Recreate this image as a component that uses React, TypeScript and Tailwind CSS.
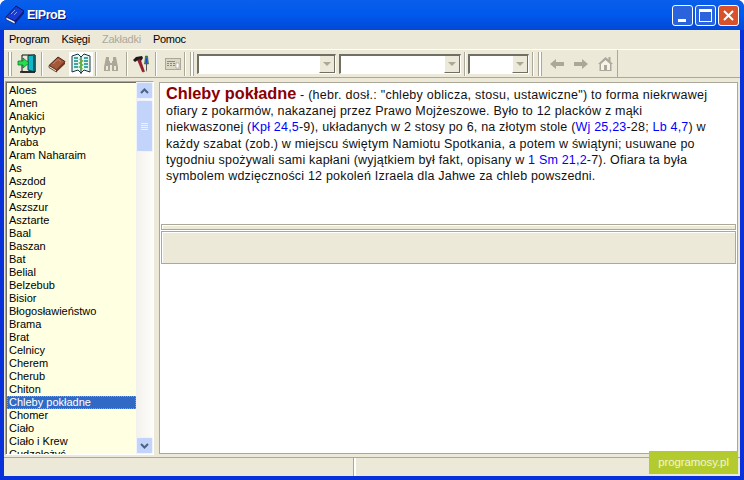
import React from 'react';

const terms = [
  'Aloes', 'Amen', 'Anakici', 'Antytyp', 'Araba', 'Aram Naharaim', 'As', 'Aszdod', 'Aszery', 'Aszszur', 'Asztarte',
  'Baal', 'Baszan', 'Bat', 'Belial', 'Belzebub', 'Bisior', 'Błogosławieństwo', 'Brama', 'Brat', 'Celnicy', 'Cherem',
  'Cherub', 'Chiton', 'Chleby pokładne', 'Chomer', 'Ciało', 'Ciało i Krew', 'Cudzołożyć',
];

const Gripper = ({ className }: { className: string }) => (
  <div className={`w-[4px] h-[24px] border-x border-x-[#aca899] bg-white shrink-0 ${className}`} />
);
const Sep = ({ className }: { className: string }) => (
  <div className={`w-[2px] h-[24px] border-l border-l-[#aca899] bg-white shrink-0 ${className}`} />
);

const Combo = ({ className }: { className: string }) => (
  <div className={`h-[20px] shrink-0 flex bg-white border-t-2 border-l-2 border-t-[#716f64] border-l-[#716f64] border-r border-b border-r-white border-b-white ${className}`}>
    <div className="flex-1" />
    <div className="w-[16px] bg-[#ece9d8] border-l border-l-white border-r border-r-[#716f64] border-b border-b-[#716f64] flex items-center justify-center">
      <div className="w-0 h-0 border-x-[4px] border-x-transparent border-t-[4px] border-t-[#aca899]" />
    </div>
  </div>
);

const DoorIcon = () => (
  <svg width="20" height="20" viewBox="0 0 20 20">
    <path d="M5 1h13v17H5z" fill="#ece9d8" stroke="#111" strokeWidth="1" />
    <path d="M11 1.500l7-0.500v17l-7-2z" fill="#12b8c6" stroke="#063c44" strokeWidth="1" />
    <path d="M16 2h2v16h-2z" fill="#0a5f6a" />
    <path d="M1 7h5V4l6 5-6 5v-3H1z" fill="#22e04a" stroke="#0b7a30" strokeWidth="0.8" />
    <path d="M3 18h15" stroke="#111" strokeWidth="1.400" />
  </svg>
);

const BookIcon = () => (
  <svg width="18" height="18" viewBox="0 0 18 18">
    <path d="M1 10.500L10 2l7 4.500-8.500 8.500z" fill="#a5573a" stroke="#4a2415" />
    <path d="M1 10.500l7.500 4.500v2L1 12.500z" fill="#f6ecd8" stroke="#4a2415" strokeWidth="0.8" />
    <path d="M8.500 15L17 6.500V9L8.500 17z" fill="#6e3219" />
    <path d="M5 9l5-4.500 3 2" stroke="#c98468" fill="none" />
  </svg>
);

const MapIcon = () => (
  <svg width="20" height="22" viewBox="0 0 20 22">
    <path d="M1 3l6 -2 3 3 3-3 6 2v16l-6-2-3 3-3-3-6 2z" fill="#e8f6f0" stroke="#12383f" />
    <path d="M10 4v17" stroke="#12383f" />
    <path d="M3 5h4M3 8h4M3 11h4M3 14h4M13 5h4M13 8h4M13 11h4M13 14h4" stroke="#0d8a90" strokeWidth="1.600" />
    <path d="M8.500 6l3 2-3 2 3 2-3 2 3 2" stroke="#5fb52c" strokeWidth="1.400" fill="none" />
  </svg>
);

const BinocularsIcon = () => (
  <svg width="16" height="16" viewBox="0 0 16 16" fill="#aca899">
    <path d="M3 1h3v4h1v2h2V5h1V1h3l2 10v4H9V9H7v6H1v-4z" />
    <path d="M3 10h2v4H3zM11 10h2v4h-2z" fill="#ece9d8" />
  </svg>
);

const ToolsIcon = () => (
  <svg width="18" height="18" viewBox="0 0 18 18">
    <path d="M1 5l3-3 6-1 1 2-2 3-3-1-3 2z" fill="#1a1a1a" />
    <path d="M5.500 5l2.500-1.500L12.500 16.500 10.500 17z" fill="#a61b2a" stroke="#5a0f15" strokeWidth="0.5" />
    <path d="M13.500 1h2l1 8h-4z" fill="#1e9a3c" stroke="#0a4a1a" strokeWidth="0.5" />
    <path d="M14 3h1v5h-1z" fill="#2344c8" />
    <path d="M14 9h1v6l-0.500 2-0.500-2z" fill="#555" />
  </svg>
);

const CalcIcon = () => (
  <svg width="16" height="12" viewBox="0 0 16 12">
    <path d="M0 0h16v12H0z" fill="#aca899" />
    <path d="M1 1h14v10H1z" fill="#dcd8c6" />
    <path d="M2 3h8v1H2zM2 5h2v1H2zM5 5h2v1H5zM8 5h2v1H8zM2 7h2v1H2zM5 7h2v1H5zM8 7h2v1H8z" fill="#8d8a7c" />
    <path d="M11 5h3v5h-3z" fill="#fff" stroke="#8d8a7c" strokeWidth="0.5" />
  </svg>
);

const ArrowIcon = ({ flip }: { flip?: boolean }) => (
  <svg width="14" height="12" viewBox="0 0 14 12" className={flip ? '-scale-x-100' : ''}>
    <path d="M0 6l6-5v3h8v4H6v3z" fill="#aca899" />
  </svg>
);

const HomeIcon = () => (
  <svg width="15" height="15" viewBox="0 0 15 15">
    <path d="M0 8l7.500-7 3 2.500V1h2v4.500L15 8h-1.500v7h-12V8z" fill="#aca899" />
    <path d="M3 8l4.500-4L12 8v6H3z" fill="#f5f3ea" />
    <path d="M6 9h3v5H6z" fill="#aca899" />
  </svg>
);

const ScrollArrow = ({ down }: { down?: boolean }) => (
  <div className="h-[17px] shrink-0 rounded-[2px] bg-[#c3d4fb] border border-[#eef3ff] flex items-center justify-center">
    <svg width="9" height="6" viewBox="0 0 9 6" className={down ? '' : 'rotate-180'}>
      <path d="M1 1l3.500 3.500L8 1" stroke="#4d6185" strokeWidth="2" fill="none" />
    </svg>
  </div>
);

const Ref = ({ children }: { children: React.ReactNode }) => <span className="text-[#0000ff]">{children}</span>;

const App: React.FC = () => {
  return (
    <div className="w-[744px] h-[480px] relative overflow-hidden flex flex-col bg-[#0831d9] rounded-t-[7px] font-['Liberation_Sans',Arial,sans-serif] text-black">
      {/* title bar */}
      <div className="h-[30px] shrink-0 flex items-center pl-[5px] pr-[5px] bg-gradient-to-b from-[#0a5fea] via-[#0058ee] to-[#0348d4]">
        <svg width="20" height="20" viewBox="0 0 20 20">
          <path d="M1 12L11 1l8 5-9 10z" fill="#1a3ad8" stroke="#0a1660" />
          <path d="M1 12l9 4.500v2.500L1 14.500z" fill="#fff" stroke="#0a1660" strokeWidth="0.7" />
          <path d="M10 16.500L19 6v2.500L10 19z" fill="#0f1f80" />
          <path d="M6 9l4-4M9 10l3-3" stroke="#7fa6ff" />
        </svg>
        <span className="ml-[2px] text-white text-[12.500px] font-bold tracking-[-0.500px] [text-shadow:1px_1px_#0f1089]">ElProB</span>
        <div className="ml-auto flex gap-[2px]">
          <div className="w-[21px] h-[21px] rounded-[3px] border border-white bg-[#2b63dd] flex items-end pb-[3px] pl-[5px]">
            <div className="w-[8px] h-[3px] bg-white" />
          </div>
          <div className="w-[21px] h-[21px] rounded-[3px] border border-white bg-[#2b63dd] flex items-center justify-center">
            <div className="w-[13px] h-[13px] border border-white border-t-[3px]" />
          </div>
          <div className="w-[21px] h-[21px] rounded-[3px] border border-white bg-[#d9512a] flex items-center justify-center">
            <svg width="11" height="11" viewBox="0 0 11 11">
              <path d="M1 1l9 9M10 1l-9 9" stroke="#fff" strokeWidth="2" />
            </svg>
          </div>
        </div>
      </div>

      <div className="flex-1 min-h-0 mx-[4px] mb-[4px] bg-[#ece9d8] flex flex-col">
        {/* menu */}
        <div className="h-[19px] shrink-0 flex items-center pl-[5px] gap-[12px] text-[11px] tracking-[-0.250px]">
          <span>Program</span>
          <span>Księgi</span>
          <span className="text-[#aca899]">Zakładki</span>
          <span>Pomoc</span>
        </div>

        {/* toolbar */}
        <div className="h-[29px] shrink-0 border-t border-t-white border-b border-b-[#aca899] flex items-center">
          <div className="h-[27px] w-[614px] flex items-center border-r border-r-[#aca899] pl-[1px]">
            <Gripper className="ml-[3px]" />
            <div className="w-[20px] ml-[5px] flex justify-center"><DoorIcon /></div>
            <Sep className="ml-[4px]" />
            <div className="w-[18px] ml-[5px] flex justify-center"><BookIcon /></div>
            <div className="w-[24px] h-[24px] ml-[3px] bg-white flex items-center justify-center"><MapIcon /></div>
            <Sep className="ml-[2px]" />
            <div className="w-[16px] ml-[6px] flex justify-center"><BinocularsIcon /></div>
            <Sep className="ml-[7px]" />
            <div className="w-[18px] ml-[4px] flex justify-center"><ToolsIcon /></div>
            <Sep className="ml-[5px]" />
            <div className="w-[16px] ml-[8px] flex justify-center"><CalcIcon /></div>
            <Sep className="ml-[3px]" />
            <Gripper className="ml-[4px]" />
            <Combo className="w-[139px] ml-[3px]" />
            <Combo className="w-[122px] ml-[3px]" />
            <Sep className="ml-[3px]" />
            <Combo className="w-[61px] ml-[2px]" />
            <Sep className="ml-[3px]" />
            <Gripper className="ml-[4px]" />
            <div className="ml-[8px] flex items-center gap-[10px]">
              <ArrowIcon />
              <ArrowIcon flip />
              <HomeIcon />
            </div>
          </div>
        </div>

        {/* main */}
        <div className="flex-1 min-h-0 flex pt-[3px] pl-[1px] pr-[2px]">
          <div className="w-[149px] shrink-0 flex border border-[#aca899] border-r-white border-b-white">
            <div className="w-[130px] pt-[1px] bg-[#ffffe1] overflow-hidden border-l border-t border-[#716f64]">
              {terms.map((term) => (
                <div
                  key={term}
                  className={`h-[13px] pl-[2px] text-[11px] leading-[13px] whitespace-nowrap ${
                    term === 'Chleby pokładne' ? 'bg-[#316ac5] text-white outline-1 -outline-offset-1 outline-dotted outline-[#c59a3a]' : ''
                  }`}
                >
                  {term}
                </div>
              ))}
            </div>
            <div className="w-[17px] bg-gradient-to-r from-[#f3f1ec] to-[#fdfdfa] flex flex-col">
              <ScrollArrow />
              <div className="h-[52px] mt-[1px] shrink-0 bg-[#c3d4fb] border border-[#eef3ff] rounded-[2px] flex flex-col items-center justify-center gap-[1px]">
                <div className="w-[7px] h-[1px] bg-[#eef3ff]" />
                <div className="w-[7px] h-[1px] bg-[#eef3ff]" />
                <div className="w-[7px] h-[1px] bg-[#eef3ff]" />
                <div className="w-[7px] h-[1px] bg-[#eef3ff]" />
              </div>
              <div className="flex-1" />
              <ScrollArrow down />
            </div>
          </div>

          <div className="w-[5px] shrink-0" />

          <div className="flex-1 min-w-0 flex flex-col border border-[#aca899] mt-[1px] mb-[1px] bg-white">
            <div className="h-[141px] shrink-0 px-[6px] pt-[2px] text-[12.500px] leading-[16.200px] tracking-[0.2px] text-[#111] whitespace-nowrap">
              <div className="tracking-[0.265px]">
                <span className="text-[16.300px] font-bold text-[#8b0000] tracking-normal">Chleby pokładne</span> - (hebr. dosł.: "chleby oblicza, stosu, ustawiczne") to forma niekrwawej
              </div>
              <div>ofiary z pokarmów, nakazanej przez Prawo Mojżeszowe. Było to 12 placków z mąki</div>
              <div>niekwaszonej (<Ref>Kpł 24,5</Ref>-9), układanych w 2 stosy po 6, na złotym stole (<Ref>Wj 25,23</Ref>-28; <Ref>Lb 4,7</Ref>) w</div>
              <div>każdy szabat (zob.) w miejscu świętym Namiotu Spotkania, a potem w świątyni; usuwane po</div>
              <div>tygodniu spożywali sami kapłani (wyjątkiem był fakt, opisany w <Ref>1 Sm 21,2</Ref>-7). Ofiara ta była</div>
              <div>symbolem wdzięczności 12 pokoleń Izraela dla Jahwe za chleb powszedni.</div>
            </div>
            <div className="h-[6px] shrink-0 mx-[1px] border border-[#aca899] bg-[#ece9d8] shadow-[inset_1px_1px_#fff]" />
            <div className="h-[1px] shrink-0" />
            <div className="h-[33px] shrink-0 mx-[1px] bg-[#ece9d8] border border-[#aca899] shadow-[inset_1px_1px_#fff]" />
            <div className="flex-1 bg-white" />
          </div>
        </div>

        {/* status bar */}
        <div className="h-[19px] shrink-0 mt-[2px] border-t border-t-[#aca899] flex">
          <div className="w-[350px] border-r border-r-[#aca899]" />
          <div className="w-[2px] bg-white" />
          <div className="flex-1" />
        </div>
      </div>

      {/* watermark */}
      <div className="absolute left-[649px] top-[451px] w-[89px] h-[23px] bg-[#b4cb30] flex items-center justify-center text-[11.500px] tracking-[-0.100px] text-[#f2f6d4]">
        programosy.pl
      </div>
    </div>
  );
};

export default App;
